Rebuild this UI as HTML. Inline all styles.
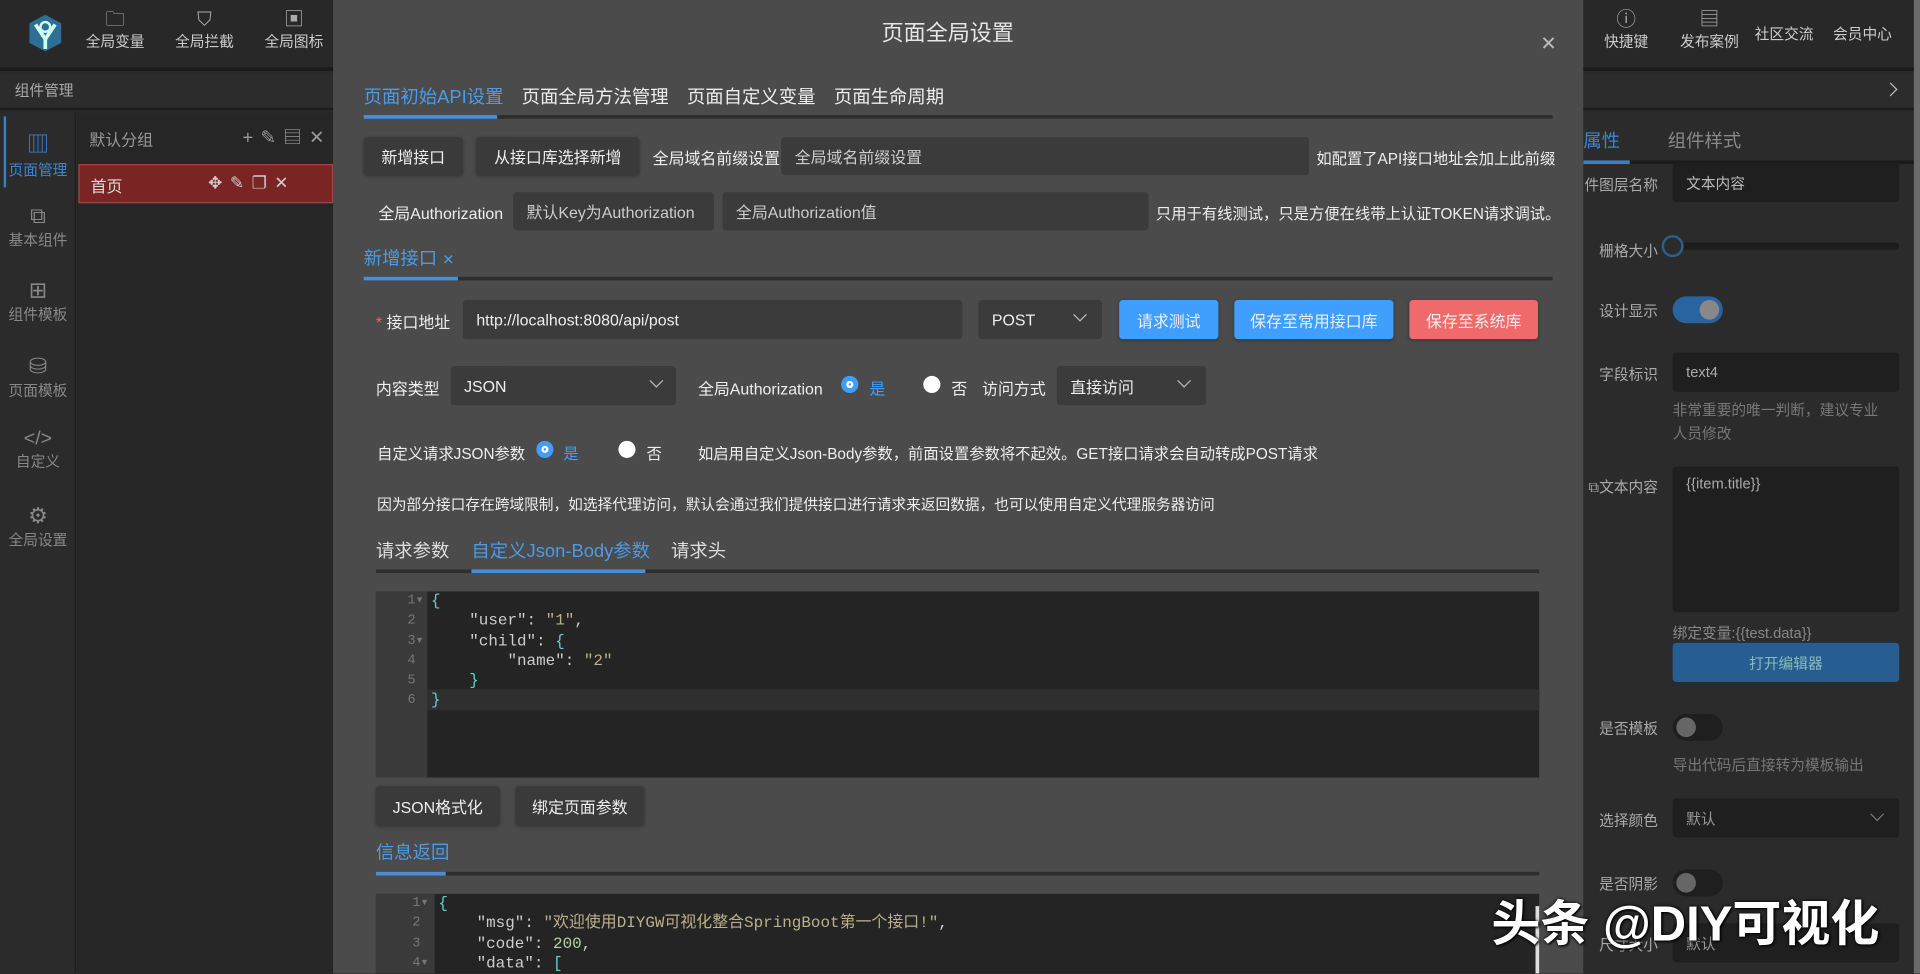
<!DOCTYPE html>
<html><head><meta charset="utf-8"><style>
*{margin:0;padding:0;box-sizing:border-box}
html,body{width:1920px;height:974px;overflow:hidden;background:#2a2a2a}
#w{position:absolute;left:0;top:0;width:1568px;height:795px;transform:scale(1.22449);transform-origin:0 0;font-family:"Liberation Sans","Noto Sans CJK SC",sans-serif;font-size:13px;color:#ddd;overflow:hidden;background:#2a2a2a}
.a{position:absolute;white-space:nowrap}
.inp{position:absolute;background:#3b3b3b;border-radius:3px;color:#ccc;font-size:13px;padding-left:11px;display:flex;align-items:center}
.btn{position:absolute;background:#3a3a3a;border-radius:3px;color:#eee;font-size:13px;display:flex;align-items:center;justify-content:center;box-shadow:0 1px 3px rgba(0,0,0,.3)}
.lbl{position:absolute;color:#eee;font-size:13px;white-space:nowrap}
.rl{position:absolute;color:#aaa;font-size:12px;white-space:nowrap;right:214px}
.rin{position:absolute;left:1366px;width:185px;background:#1f1f1f;border-radius:3px;color:#aaa;font-size:12px;padding-left:11px;display:flex;align-items:center}
.chev{position:absolute;width:8px;height:8px;border-right:1.3px solid #bbb;border-bottom:1.3px solid #bbb;transform:rotate(45deg)}
.radio{position:absolute;width:14px;height:14px;border-radius:50%}
.code{font-family:"Liberation Mono","Noto Sans CJK SC",monospace;font-size:13px}
.nav{position:absolute;top:8px;text-align:center;color:#ccc;font-size:12px;line-height:17px}
.nav span{font-size:16px;color:#aaa}
.side{position:absolute;left:0;width:62px;text-align:center;color:#888;font-size:12px}
</style></head><body><div id="w">
<div class="a" style="left:0;top:0;width:1568px;height:58px;background:#282828;border-bottom:3px solid #1a1a1a"></div>
<svg class="a" style="left:20px;top:10px" width="34" height="34" viewBox="0 0 34 34"><path d="M17 2 L30 9 L30 25 L17 32 L4 25 L4 9Z" fill="#2d6f96"/><path d="M9 10 L17 22 L25 10 M17 22 L17 30" stroke="#cfe" stroke-width="3" fill="none"/><circle cx="17" cy="12" r="4" fill="none" stroke="#cfe" stroke-width="2"/></svg>
<div class="nav" style="left:70px"><span>🗀</span><br>全局变量</div>
<div class="nav" style="left:143px"><span>⛉</span><br>全局拦截</div>
<div class="nav" style="left:216px"><span>▣</span><br>全局图标</div>
<div class="nav" style="left:1310px"><span>ⓘ</span><br>快捷键</div>
<div class="nav" style="left:1372px"><span>▤</span><br>发布案例</div>
<div class="a" style="left:1433px;top:19px;color:#ccc;font-size:12px">社区交流</div>
<div class="a" style="left:1497px;top:19px;color:#ccc;font-size:12px">会员中心</div>
<div class="a" style="left:0;top:60px;width:1568px;height:30px;background:#2c2c2c;border-bottom:2px solid #1c1c1c"></div>
<div class="a" style="left:12px;top:65px;color:#aaa;font-size:12px">组件管理</div>
<div class="chev" style="left:1540px;top:69px;transform:rotate(-45deg)"></div>
<div class="a" style="left:0;top:92px;width:62px;height:703px;background:#2b2b2b;border-right:1px solid #1e1e1e"></div>
<div class="a" style="left:3px;top:95px;width:2px;height:58px;background:#3a7fc4"></div>
<div class="side" style="top:104px;color:#3a86d4"><span style="font-size:18px">▥</span><br>页面管理</div>
<div class="side" style="top:166px"><span style="font-size:18px">⧉</span><br>基本组件</div>
<div class="side" style="top:227px"><span style="font-size:18px">⊞</span><br>组件模板</div>
<div class="side" style="top:289px"><span style="font-size:18px">⛁</span><br>页面模板</div>
<div class="side" style="top:350px"><span style="font-size:16px">&lt;/&gt;</span><br>自定义</div>
<div class="side" style="top:411px"><span style="font-size:18px">⚙</span><br>全局设置</div>
<div class="a" style="left:63px;top:92px;width:209px;height:703px;background:#262626"></div>
<div class="a" style="left:73px;top:104px;color:#999;font-size:13px">默认分组</div>
<div class="a" style="left:198px;top:101px;color:#999;font-size:15px;letter-spacing:6px">+✎▤✕</div>
<div class="a" style="left:64px;top:134px;width:208px;height:32px;background:#7b2424;border:1px solid #a04848"></div>
<div class="a" style="left:74px;top:142px;color:#ddd;font-size:13px">首页</div>
<div class="a" style="left:170px;top:141px;color:#ccc;font-size:14px;letter-spacing:6px">✥✎❐✕</div>
<div class="a" style="left:1293px;top:92px;width:275px;height:703px;background:#2b2b2b"></div>
<div class="a" style="left:1563px;top:0;width:5px;height:795px;background:#6a6a6a"></div>
<div class="a" style="left:1293px;top:104px;color:#3a86d4;font-size:15px">属性</div>
<div class="a" style="left:1362px;top:104px;color:#888;font-size:15px">组件样式</div>
<div class="a" style="left:1293px;top:131px;width:270px;height:3px;background:#1c1c1c"></div>
<div class="a" style="left:1293px;top:131px;width:38px;height:3px;background:#3a7fc4"></div>
<div class="rl" style="top:142px">件图层名称</div><div class="rin" style="top:133px;height:32px;color:#bbb">文本内容</div>
<div class="rl" style="top:196px">栅格大小</div>
<div class="a" style="left:1366px;top:198px;width:185px;height:6px;background:#1d1d1d;border-radius:3px"></div>
<div class="a" style="left:1357px;top:192px;width:18px;height:18px;border-radius:50%;border:2px solid #2e5f8a;background:#2b2b2b"></div>
<div class="rl" style="top:245px">设计显示</div>
<div class="a" style="left:1366px;top:242px;width:41px;height:22px;border-radius:11px;background:#2a64a0"></div>
<div class="a" style="left:1388px;top:245px;width:16px;height:16px;border-radius:50%;background:#888"></div>
<div class="rl" style="top:297px">字段标识</div><div class="rin" style="top:288px;height:32px">text4</div>
<div class="a" style="left:1366px;top:326px;color:#777;font-size:12px;line-height:19px">非常重要的唯一判断，建议专业<br>人员修改</div>
<div class="rl" style="top:389px">⧉文本内容</div>
<div class="rin" style="top:381px;height:119px;align-items:flex-start;padding-top:7px">{{item.title}}</div>
<div class="a" style="left:1366px;top:508px;color:#888;font-size:12px">绑定变量:{{test.data}}</div>
<div class="a" style="left:1366px;top:525px;width:185px;height:32px;background:#285d91;border-radius:3px;color:#8bb;font-size:12px;display:flex;align-items:center;justify-content:center">打开编辑器</div>
<div class="rl" style="top:586px">是否模板</div>
<div class="a" style="left:1366px;top:583px;width:41px;height:22px;border-radius:11px;background:#1f1f1f"></div>
<div class="a" style="left:1369px;top:586px;width:16px;height:16px;border-radius:50%;background:#666"></div>
<div class="a" style="left:1366px;top:616px;color:#777;font-size:12px">导出代码后直接转为模板输出</div>
<div class="rl" style="top:661px">选择颜色</div><div class="rin" style="top:652px;height:32px;color:#999">默认</div><div class="chev" style="left:1529px;top:661px;border-color:#777"></div>
<div class="rl" style="top:713px">是否阴影</div>
<div class="a" style="left:1366px;top:710px;width:41px;height:22px;border-radius:11px;background:#1f1f1f"></div>
<div class="a" style="left:1369px;top:713px;width:16px;height:16px;border-radius:50%;background:#666"></div>
<div class="rl" style="top:763px">尺寸大小</div><div class="rin" style="top:754px;height:32px;color:#999">默认</div>
<div class="a" style="left:272px;top:0;width:1021px;height:795px;background:#4b4b4b"></div>
<div class="a" style="left:0;top:13px;width:1548px;text-align:center;color:#e6e6e6;font-size:18px">页面全局设置</div>
<div class="a" style="left:1258px;top:26px;color:#bbb;font-size:16px">✕</div>
<div class="a" style="left:297px;top:68px;font-size:15px;color:#4a9be8">页面初始API设置</div>
<div class="a" style="left:426px;top:68px;font-size:15px;color:#eee">页面全局方法管理</div>
<div class="a" style="left:561px;top:68px;font-size:15px;color:#eee">页面自定义变量</div>
<div class="a" style="left:681px;top:68px;font-size:15px;color:#eee">页面生命周期</div>
<div class="a" style="left:297px;top:94px;width:971px;height:3px;background:#2e2e2e"></div>
<div class="a" style="left:297px;top:94px;width:109px;height:3px;background:#4a8fd6"></div>
<div class="btn" style="left:297px;top:112px;width:81px;height:31px">新增接口</div>
<div class="btn" style="left:389px;top:112px;width:133px;height:31px">从接口库选择新增</div>
<div class="lbl" style="left:533px;top:119px">全局域名前缀设置</div>
<div class="inp" style="left:638px;top:112px;width:431px;height:31px">全局域名前缀设置</div>
<div class="lbl" style="left:1075px;top:119px;font-size:12.5px">如配置了API接口地址会加上此前缀</div>
<div class="lbl" style="left:309px;top:164px">全局Authorization</div>
<div class="inp" style="left:419px;top:157px;width:164px;height:31px">默认Key为Authorization</div>
<div class="inp" style="left:590px;top:157px;width:348px;height:31px">全局Authorization值</div>
<div class="lbl" style="left:944px;top:164px;font-size:12.5px">只用于有线测试，只是方便在线带上认证TOKEN请求调试。</div>
<div class="a" style="left:297px;top:200px;font-size:15px;color:#4a9be8">新增接口 <span style="font-size:12px">✕</span></div>
<div class="a" style="left:297px;top:226px;width:971px;height:3px;background:#2e2e2e"></div>
<div class="a" style="left:297px;top:226px;width:77px;height:3px;background:#4a8fd6"></div>
<div class="lbl" style="left:307px;top:253px"><span style="color:#e66">*</span> 接口地址</div>
<div class="inp" style="left:378px;top:245px;width:408px;height:32px;color:#eee">http://localhost:8080/api/post</div>
<div class="inp" style="left:799px;top:245px;width:101px;height:32px;color:#eee">POST</div><div class="chev" style="left:878px;top:253px"></div>
<div class="btn" style="left:914px;top:245px;width:81px;height:32px;background:#409eff">请求测试</div>
<div class="btn" style="left:1008px;top:245px;width:130px;height:32px;background:#409eff">保存至常用接口库</div>
<div class="btn" style="left:1151px;top:245px;width:105px;height:32px;background:#ef6b6b">保存至系统库</div>
<div class="lbl" style="left:307px;top:307px">内容类型</div>
<div class="inp" style="left:368px;top:299px;width:184px;height:32px;color:#eee">JSON</div><div class="chev" style="left:532px;top:307px"></div>
<div class="lbl" style="left:570px;top:307px">全局Authorization</div>
<div class="radio" style="left:687px;top:307px;background:#409eff;border:4px solid #409eff;box-shadow:inset 0 0 0 2px #fff"></div>
<div class="lbl" style="left:710px;top:307px;color:#409eff">是</div>
<div class="radio" style="left:754px;top:307px;background:#fff"></div>
<div class="lbl" style="left:777px;top:307px">否</div>
<div class="lbl" style="left:802px;top:307px">访问方式</div>
<div class="inp" style="left:863px;top:299px;width:122px;height:32px;color:#eee">直接访问</div><div class="chev" style="left:963px;top:307px"></div>
<div class="lbl" style="left:308px;top:360px;font-size:12.5px">自定义请求JSON参数</div>
<div class="radio" style="left:438px;top:360px;background:#409eff;border:4px solid #409eff;box-shadow:inset 0 0 0 2px #fff"></div>
<div class="lbl" style="left:460px;top:360px;color:#409eff;font-size:12.5px">是</div>
<div class="radio" style="left:505px;top:360px;background:#fff"></div>
<div class="lbl" style="left:528px;top:360px;font-size:12.5px">否</div>
<div class="lbl" style="left:570px;top:360px;font-size:12.5px">如启用自定义Json-Body参数，前面设置参数将不起效。GET接口请求会自动转成POST请求</div>
<div class="lbl" style="left:308px;top:403px;font-size:12px">因为部分接口存在跨域限制，如选择代理访问，默认会通过我们提供接口进行请求来返回数据，也可以使用自定义代理服务器访问</div>
<div class="a" style="left:307px;top:439px;font-size:15px;color:#ddd">请求参数</div>
<div class="a" style="left:385px;top:439px;font-size:15px;color:#4a9be8">自定义Json-Body参数</div>
<div class="a" style="left:548px;top:439px;font-size:15px;color:#ddd">请求头</div>
<div class="a" style="left:307px;top:465px;width:950px;height:3px;background:#2e2e2e"></div>
<div class="a" style="left:385px;top:465px;width:142px;height:3px;background:#4a8fd6"></div>
<div class="a" style="left:307px;top:483px;width:950px;height:152px;background:#242424"></div>
<div class="a" style="left:307px;top:483px;width:42px;height:152px;background:#3a3a3a"></div>
<div class="a" style="left:349px;top:563px;width:908px;height:17px;background:#2f2f2f"></div>
<div class="a code" style="left:318px;top:483px;color:#777;font-size:11px;line-height:16.3px;text-align:right;width:28px">1▾<br>2&nbsp;<br>3▾<br>4&nbsp;<br>5&nbsp;<br>6&nbsp;</div>
<div class="a code" style="left:352px;top:483px;line-height:16.3px;color:#ccc"><span style="color:#6cc">{</span><br>&nbsp;&nbsp;&nbsp;&nbsp;"user": <span style="color:#bcb08a">"1"</span>,<br>&nbsp;&nbsp;&nbsp;&nbsp;"child": <span style="color:#6cc">{</span><br>&nbsp;&nbsp;&nbsp;&nbsp;&nbsp;&nbsp;&nbsp;&nbsp;"name": <span style="color:#bcb08a">"2"</span><br>&nbsp;&nbsp;&nbsp;&nbsp;<span style="color:#6cc">}</span><br><span style="color:#6cc">}</span></div>
<div class="btn" style="left:307px;top:642px;width:101px;height:32px">JSON格式化</div>
<div class="btn" style="left:421px;top:642px;width:105px;height:32px">绑定页面参数</div>
<div class="a" style="left:307px;top:685px;font-size:15px;color:#4a9be8">信息返回</div>
<div class="a" style="left:307px;top:712px;width:950px;height:3px;background:#2e2e2e"></div>
<div class="a" style="left:307px;top:712px;width:57px;height:3px;background:#4a8fd6"></div>
<div class="a" style="left:307px;top:730px;width:950px;height:65px;background:#242424"></div>
<div class="a" style="left:307px;top:730px;width:48px;height:65px;background:#3a3a3a"></div>
<div class="a code" style="left:322px;top:730px;color:#777;font-size:11px;line-height:16.3px;text-align:right;width:28px">1▾<br>2&nbsp;<br>3&nbsp;<br>4▾</div>
<div class="a code" style="left:358px;top:730px;line-height:16.3px;color:#ccc"><span style="color:#6cc">{</span><br>&nbsp;&nbsp;&nbsp;&nbsp;"msg": <span style="color:#bcb08a">"欢迎使用DIYGW可视化整合SpringBoot第一个接口!"</span>,<br>&nbsp;&nbsp;&nbsp;&nbsp;"code": <span style="color:#b5d6a0">200</span>,<br>&nbsp;&nbsp;&nbsp;&nbsp;"data": <span style="color:#6cc">[</span></div>
<div class="a" style="left:1254px;top:740px;width:3px;height:55px;background:#ddd"></div>
<div class="a" style="left:1218px;top:722px;color:#fff;font-size:40px;font-weight:bold;text-shadow:0 0 3px #000,1px 1px 2px #000">头条 @DIY可视化</div>
</div></body></html>
